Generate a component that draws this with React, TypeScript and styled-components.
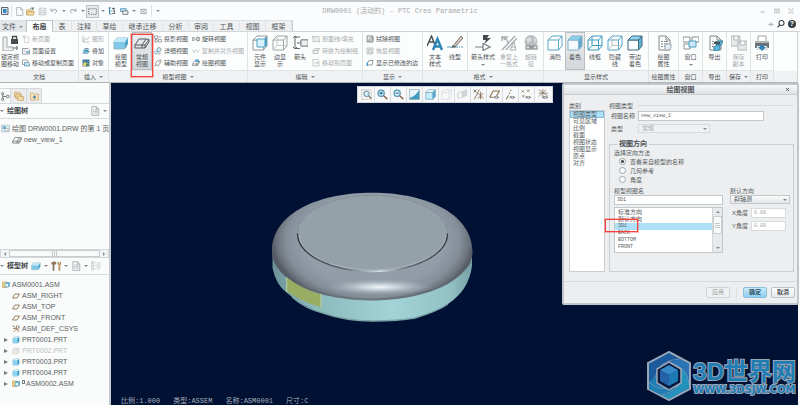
import React from "react";
import styled, { createGlobalStyle, css } from "styled-components";

const SANS = `"Liberation Sans", "Noto Sans CJK SC", sans-serif`;
const MONO = `"Liberation Mono", "Noto Sans CJK SC", monospace`;

const Global = createGlobalStyle`
  * { box-sizing: border-box; }
  html, body { margin: 0; padding: 0; }
  body { font: 6px/8px ${SANS}; color: #4c5155; background: #fafbfb; overflow: hidden; }
  button, input, select { font: inherit; color: inherit; margin: 0; padding: 0; border: 0; background: none; }
  ul { list-style: none; margin: 0; padding: 0; }
  h1, h2 { margin: 0; font: inherit; }
`;

/* ---------- icons (16 unit grid) ---------- */

const page = <path d="M3 1h7l4 4v10H3zM10 1v4h4" fill="#fbfcfc" stroke="#858b90" />;
const lines = <path d="M5 6.500h2m1 0h4M5 9h2m1 0h4M5 11.500h2m1 0h4" stroke="#858b90" />;
const floppy = <path d="M2 2h12v12H2zM5 2v5h6V2M4 14v-4h8v4" fill="#eceff0" stroke="#b0b4b7" />;
const eye = (
  <>
    <path d="M6 12q4-4 9 0q-4 4-9 0z" fill="#777d82" />
    <circle cx="10.500" cy="12" r="1.200" fill="#fff" />
  </>
);

const wireFrame = "M1 5l4-4h10l-3.500 4zM1 5v10h10.500V5M11.500 15L15 11V1";

function cube(front: string, top: string, side: string, line: string) {
  return (
    <g stroke={line} strokeLinejoin="round">
      <path d="M1 5h10.500v10H1z" fill={front} />
      <path d="M1 5l4-4h10l-3.500 4z" fill={top} />
      <path d="M11.500 5L15 1v10l-3.500 4z" fill={side} />
    </g>
  );
}

const slab = (
  <g strokeLinejoin="round">
    <path d="M1 7l3-4h11l-3 4v6l-1 1H1z" fill="#80c8e8" stroke="#8eb8ca" />
    <path d="M1 7l3-4h11l-3 4z" fill="#c4eaf8" />
    <path d="M12 7l3-4v6l-3 5z" fill="#4fa4cb" />
  </g>
);
const slabLine = (
  <path
    d="M1 10l4-6h7l-4 6zM1 10v3h7v-3M8 13h3l4-6V4.500L12 4M11 13v-3l4-5.500M8 10h3"
    fill="none"
    stroke="#565b60"
    strokeLinejoin="round"
  />
);

const ICONS: Record<string, React.ReactNode> = {
  app: (
    <>
      <path d="M1 1h13v14H1z" fill="#dbeaf3" stroke="#61676c" strokeWidth="2" />
      <path d="M4 4h7v8H4z" fill="#328ac0" />
    </>
  ),
  page,
  list: <>{page}{lines}</>,
  open: (
    <>
      <path d="M1 14V5h5l1 2h6v7z" fill="#f2d08c" stroke="#b58e45" />
      <path d="M1 14l3-5h11l-2 5z" fill="#fbe3ad" stroke="#b58e45" />
      <path d="M7 4q3-4 6-1M13 0v4h-3" fill="none" stroke="#5c6266" strokeWidth="1.500" />
    </>
  ),
  save: floppy,
  undo: <path d="M2 3v5h5M2.500 8q5-6 10-2q3 4-3 7" fill="none" stroke="#999ea2" strokeWidth="1.800" />,
  redo: <path d="M14 3v5H9M13.500 8q-5-6-10-2q-3 4 3 7" fill="none" stroke="#999ea2" strokeWidth="1.800" />,
  marquee: <path d="M1 3h14v10H1z" fill="none" stroke="#54595d" strokeDasharray="2 1.500" strokeWidth="1.300" />,
  regen: (
    <>
      <path d="M3 1v13M1 2h5M3 8h4M3 14h4" stroke="#3e8db3" strokeWidth="2" />
      <path d="M8 3h6M9 8h5M8 13h6M11 1v5M13 6v6" stroke="#4f565b" strokeWidth="1.600" />
    </>
  ),
  windows: (
    <>
      <path d="M1 3h10v5H1z" fill="#cbe8f5" stroke="#4c91b2" strokeWidth="1.500" />
      <path d="M5 7h9v6H5z" fill="#f7f9fa" stroke="#656b70" strokeWidth="1.500" />
    </>
  ),
  close: <path d="M2 3h12v10H2zM5 5l6 6M11 5l-6 6" fill="none" stroke="#71777b" strokeWidth="1.400" />,
  lock: (
    <>
      <path d="M1 2h4v10h6v4H1z" fill="#eceff0" stroke="#a1a6a9" />
      <path d="M9 4h7v5H9z" fill="#484d51" />
      <path d="M10.500 4V1.500h4V4" fill="none" stroke="#484d51" strokeWidth="1.400" />
      <path d="M11 13h5M14 11l2 2-2 2" fill="none" stroke="#656b70" />
    </>
  ),
  newPage: (
    <>
      <path d="M5 4h9v11H5z" fill="#fafafa" stroke="#b5b9bb" />
      <path d="M4 0v8M0 4h8M1 1l6 6M7 1L1 7" stroke="#c2c5c7" />
    </>
  ),
  pageSetup: (
    <>
      <path d="M1 3h11l3 3v8H1z" fill="#fff" stroke="#747a7e" strokeWidth="1.400" />
      <path d="M8 8h6v5H8z" fill="#82b8d0" />
      <path d="M3 6h6M3 9h4" stroke="#969b9e" />
    </>
  ),
  pageMove: (
    <>
      <path d="M1 2h9l2 2v7H1z" fill="#fff" stroke="#747a7e" strokeWidth="1.400" />
      <path d="M5 7h8l2 2v5H5z" fill="#c5e4f1" stroke="#4f8ba5" strokeWidth="1.400" />
    </>
  ),
  graph: <path d="M2 1v13h13M3 12l4-6 4 3 4-6" fill="none" stroke="#a5aaad" strokeWidth="1.400" />,
  overlay: (
    <>
      <path d="M1 8l4-3h10l-4 4z" fill="#3b99c5" />
      <path d="M1 12l4-3h10l-4 4z" fill="#8bc6df" stroke="#397b98" />
      <path d="M5 3h8" stroke="#5f676b" strokeWidth="1.500" />
    </>
  ),
  object: (
    <>
      <path d="M1 1h14v14H1z" fill="#3f7ea2" />
      <path d="M2 10l4-5 3 4 3-2 3 7H2z" fill="#e5cf6d" />
      <path d="M8 9h6v5H8z" fill="#5a8360" />
    </>
  ),
  slab,
  slabLine,
  projection: <path d="M1 2h7v5H1zM9 4h6M9 9h6v5H9zM2 9h4v5H2z" fill="none" stroke="#6b7175" strokeWidth="1.200" />,
  detail: (
    <>
      <circle cx="10" cy="5" r="4" fill="#d5edf7" stroke="#5b7d8d" strokeWidth="1.300" />
      <circle cx="4" cy="11" r="3" fill="none" stroke="#4a93b5" strokeWidth="1.400" />
      <path d="M8 12h6M8 14h4" stroke="#71777b" />
    </>
  ),
  auxiliary: <path d="M2 10l5-7 6 4-5 7zM10 2h4v4M1 14l4-2" fill="none" stroke="#6b7175" strokeWidth="1.300" />,
  rotate: <path d="M1 5h3v6H1zM5 8h3M9 5h6v6H9zM12 3v10" fill="none" stroke="#777d80" strokeWidth="1.300" />,
  align: <path d="M1 5l3 6 3-6M8 5l3 6 4-6" fill="none" stroke="#b5b9bb" strokeWidth="1.300" />,
  drawView: (
    <>
      {slabLine}
      <path d="M5 1h9v5H8z" fill="#54a9cf" />
    </>
  ),
  component: (
    <>
      {cube("#fff", "#fff", "#fff", "#92989c")}
      <path d="M5 4h8v8H5z" fill="#d9f1fa" stroke="#4aa0c4" />
      <path d="M13 4l2-3v9l-2 2z" fill="#4aa0c4" />
    </>
  ),
  edges: (
    <g fill="none" stroke="#9da2a5">
      <path d={wireFrame} />
      <path d="M5 1v9.500h10M5 10.500L1 15" stroke="#c5c8ca" />
    </g>
  ),
  arrows: (
    <g fill="none" stroke="#63696d">
      <path d="M3 1v13M3 2h5M3 13.500h5M9 5h7v6H9zM9 8H5" />
      <path d="M1 3l2-2 2 2M1 12l2 2 2-2" />
      <path d="M9 5h7v6H9z" fill="#eceff0" stroke="#8b9195" />
    </g>
  ),
  hatch: <path d="M2 3h12v10H2zM2 8l5-5M2 13L12 3M8 13l6-6M1 1v4M15 11v4" fill="none" stroke="#b0b4b7" strokeWidth="1.300" />,
  convert: <path d="M2 7l4-4h9l-3 6v4H2zM2 7h10" fill="#f3f4f5" stroke="#a5aaad" strokeWidth="1.400" />,
  movePage: <path d="M2 1h9l3 3v10H2zM5 8h7M9 5l3 3-3 3" fill="none" stroke="#b0b4b7" strokeWidth="1.400" />,
  erase: <path d="M2 2h12v12H2zM5 11l6-7 3 3-6 6z" fill="#e9edef" stroke="#666c70" strokeWidth="1.500" />,
  restore: <path d="M2 2h12v12H2zM5 5h6v6H5z" fill="#eef0f1" stroke="#b0b4b7" strokeWidth="1.500" />,
  modEdge: (
    <>
      <path d="M3 9l3-6h8l-2 9H3z" fill="#fff" stroke="#6b7175" strokeWidth="1.400" />
      <path d="M1 8l3-3v9H1z" fill="#4aa0c4" />
    </>
  ),
  textStyle: (
    <g fill="none">
      <path d="M0 11L4.500 1 8 10M2 7h5" stroke="#4d5256" strokeWidth="1.500" />
      <path d="M6 15l4.500-11L15 15M8 11.500h6" stroke="#2b86b4" strokeWidth="2.400" />
    </g>
  ),
  lineType: (
    <>
      <path d="M0 12h16" stroke="#4a9ec3" strokeDasharray="4 1 1 1" />
      <path d="M6 11L14 1l2 2-8 9z" fill="#d8c5b5" stroke="#777a7c" />
      <path d="M4 13l2-3 3 2z" fill="#565b5f" />
    </>
  ),
  arrowStyle: (
    <>
      <path d="M8 0h6l-2 3h4l-7 6 2-4H8z" fill="#44494d" />
      <path d="M0 12h8M8 8.500v7l7-3.500z" fill="#fff" stroke="#787e82" strokeWidth="1.200" />
    </>
  ),
  repeat: (
    <>
      <path d="M1 6V1M1 2h5l-3 3M1 3q5-1 6 5M1 15L14 1M5 15L16 3" fill="none" stroke="#aaaeb1" strokeWidth="1.400" />
      <path d="M9 15l4-8 2 8zM10 12h5" fill="none" stroke="#aaaeb1" />
    </>
  ),
  hyperlink: (
    <>
      <circle cx="8" cy="6.500" r="6.500" fill="#b9bdc0" />
      <path d="M3 4l4-2 2 3-4 3zM10 2l4 3-2 3z" fill="#dadddf" />
      <path d="M3 11h5v3H3zM9 11h5v3H9zM6 12.500h5" fill="#eee" stroke="#999ea1" strokeWidth="1.300" />
    </>
  ),
  hiddenOff: <path d={wireFrame} fill="#fff" stroke="#54a5c6" strokeLinejoin="round" />,
  shaded: cube("#f4fafd", "#8cd3ee", "#62aacb", "#82b2c5"),
  wire: (
    <g fill="none" stroke="#3e9abf">
      <path d={wireFrame} />
      <path d="M5 1v9.500h10M5 10.500L1 15" />
    </g>
  ),
  hiddenLine: (
    <g fill="none" stroke="#56a3c3">
      <path d={wireFrame} />
      <path d="M5 1v9.500h10M5 10.500L1 15" stroke="#b8bfc3" />
    </g>
  ),
  shadedEdge: cube("#fafcfd", "#91d4ed", "#64b0d0", "#3e6d80"),
  attributes: (
    <>
      {page}
      {lines}
      <path d="M9 9h6v4l-2 2H9z" fill="#deedf3" stroke="#a1a8ac" />
    </>
  ),
  panes: (
    <g fill="#fff" stroke="#8b9195">
      <path d="M0 2h7v5H0zM9 2h7v5H9zM1 9h6v5H1z" />
      <path d="M6 6h7v6H6z" fill="#ccebf7" stroke="#4b9fc1" />
    </g>
  ),
  exporter: (
    <>
      {page}
      {lines}
      <path d="M8 8l3-2h5l-2 4h-4zM7 12l3-2h3v4l-2 2H7z" fill="#5cb6db" stroke="#36809f" />
      <path d="M7 8h6" stroke="#484d50" strokeWidth="2" />
    </>
  ),
  saveCopy: (
    <g fill="#e6e8e9" stroke="#b3b7b9">
      <path d="M0 1h9v10H0zM3 1v4h4V1" />
      <path d="M7 6h9v9H7zM9 6v4h5V6" />
    </g>
  ),
  print: (
    <>
      <path d="M4 1h8v6H4z" fill="#fff" stroke="#9da2a5" />
      <path d="M1 6h14v7H1z" fill="#6b7175" />
      <path d="M1 6h14v2H1z" fill="#b0b5b8" />
      <path d="M3 11h10l1 4H2z" fill="#dbe0e2" />
      <path d="M6 10h4v2h2l-4 4-4-4h2z" fill="#3483b5" />
    </>
  ),
  chevron: <path d="M2 10l6-6 6 6zM5 12l3-3 3 3" fill="#fff" stroke="#7a8084" strokeWidth="1.500" />,
  search: (
    <g fill="none" stroke="#3f4448" strokeWidth="2.200">
      <circle cx="9" cy="6" r="5" />
      <path d="M5.500 10L1 14.500" />
    </g>
  ),
  min: <path d="M2 11h10" stroke="#b5b8ba" strokeWidth="3" />,
  max: <path d="M1 3h14v10H1zM1 5h14M4 9h8" fill="none" stroke="#b5b8ba" strokeWidth="2" />,
  exit: <path d="M1 2l5 6-5 6h4l3-4 3 4h4l-5-6 5-6h-4L8 6 5 2z" fill="#fff" stroke="#b5b8ba" strokeWidth="1.500" />,
  x: <path d="M3 3l10 10M13 3L3 13" stroke="#54595d" strokeWidth="3" />,
  nodes: (
    <g fill="none" stroke="#63686c" strokeWidth="1.600">
      <circle cx="3" cy="3" r="2" />
      <circle cx="3" cy="13" r="2" />
      <circle cx="12" cy="8" r="2.500" />
      <path d="M3 5v6M4 8h5" />
    </g>
  ),
  folders: (
    <g fill="#f8e0ad" stroke="#bd914d">
      <path d="M1 2h4l1 1h4v6H1z" />
      <path d="M3 5h4l1 1h4v6H3z" />
      <path d="M6 8h4l1 1h4v6H6z" />
    </g>
  ),
  favorite: (
    <>
      <path d="M1 14V2h5l2 2h7v10z" fill="#f8e6ba" stroke="#bd914d" />
      <path d="M8 6v6M5 9h6" stroke="#467da1" strokeWidth="2" />
    </>
  ),
  drawing: (
    <>
      <path d="M1 2h14v12H1z" fill="#ddebf2" stroke="#9eb0ba" />
      <path d="M3 4h6v5H3z" fill="#68b2d2" />
      <path d="M7 8h6v4H7z" fill="#fff" stroke="#8d979d" />
    </>
  ),
  tools: (
    <>
      <path d="M1 3q3-3 7-1v3H5v10H3V5H1z" fill="#9a7551" stroke="#666" strokeWidth=".6" />
      <path d="M11 1v4l1.500 2v8h2V7L16 5V1l-2 3z" fill="#d5a968" stroke="#7e6544" strokeWidth=".6" />
    </>
  ),
  treeFilter: (
    <g fill="none" stroke="#b3b7ba">
      <path d="M1 1h3v3H1zM1 6h3v3H1zM1 11h3v3H1zM6 2h3M6 7h3M6 12h3" />
      <circle cx="12" cy="8" r="2.500" />
      <path d="M10 14l5-4M10 3h5" />
    </g>
  ),
  asm: (
    <>
      <path d="M1 2h9v11H1z" fill="#f4d281" stroke="#b38d4b" />
      <path d="M6 5l2-2h7v7l-2 2H6z" fill="#62b9de" stroke="#3e84a2" />
      <path d="M7 6h5v5H7z" fill="#f0f9fc" />
    </>
  ),
  plane: <path d="M1 12L6 4h9l-5 8z" fill="none" stroke="#8f7350" strokeWidth="1.800" />,
  csys: (
    <>
      <path d="M3 2l6 6-6 6M9 8h6M9 8L9 1M9 8l5 6M2 7h6" fill="none" stroke="#8b6945" strokeWidth="1.500" />
      <path d="M1 2h3M11 2h4M12 5h3" stroke="#62686c" strokeWidth="1.600" />
    </>
  ),
  part: (
    <g strokeLinejoin="round">
      <path d="M2 5l3-3h9v9l-3 3H2z" fill="#3d9cc4" stroke="#3788a8" />
      <path d="M2 5h9v9H2z" fill="#8cd5f0" />
      <path d="M2 5l3-3h9l-3 3z" fill="#d0f1fb" />
    </g>
  ),
  partOff: <path d="M2 5l3-3h9v9l-3 3H2zM2 5h9v9M11 5l3-3" fill="#eeede5" stroke="#c7c7c0" strokeLinejoin="round" />,
  fit: (
    <>
      <path d="M1 1h14v14H1z" fill="#f5f6f7" stroke="#b2a48f" strokeDasharray="2 1" />
      <circle cx="8" cy="7" r="4" fill="#d0edf8" stroke="#668392" strokeWidth="1.400" />
      <path d="M11 10l4 4" stroke="#7a6b5c" strokeWidth="2" />
    </>
  ),
  zoomIn: (
    <>
      <circle cx="6" cy="6" r="4.500" fill="#d5effa" stroke="#3983a5" strokeWidth="1.500" />
      <path d="M6 3.500v5M3.500 6h5" stroke="#2b6f91" strokeWidth="1.500" />
      <path d="M10 10l5 5" stroke="#8a6e4c" strokeWidth="2.200" />
    </>
  ),
  zoomOut: (
    <>
      <circle cx="6" cy="6" r="4.500" fill="#d5effa" stroke="#3983a5" strokeWidth="1.500" />
      <path d="M3.500 6h5" stroke="#2b6f91" strokeWidth="1.500" />
      <path d="M10 10l5 5" stroke="#8a6e4c" strokeWidth="2.200" />
    </>
  ),
  repaint: (
    <>
      <path d="M1 1h14v14H1z" fill="#3d9dc0" stroke="#7595a1" />
      <path d="M1 1h14Q11 9 1 13z" fill="#e9f4f6" />
    </>
  ),
  display: cube("#c5ebf7", "#edf9fc", "#4baacd", "#75a8bd"),
  saved: <path d="M1 5l4-4h10v10l-3.500 4H1zM1 5h10.500v10M11.500 5L15 1" fill="#f7f7f7" stroke="#d5d7d9" />,
  viewMgr: (
    <g stroke="#c3c6c8">
      <path d="M1 6l3-2h5v7l-2 2H1z" fill="#f3f4f4" />
      <path d="M8 5l3-3h3v7l-3 2H8z" fill="#d2d5d7" />
    </g>
  ),
  datums: <path d="M1 1l4 4M5 1L1 5M2 15L9 1M7 6l8 8M7 14l8-8M11 4v11" fill="none" stroke="#80684e" strokeWidth="1.300" />,
  planes: <><path d="M1 12L6 3h9l-4 7M1 12h5" fill="none" stroke="#8d7150" strokeWidth="1.500" />{eye}</>,
  axes: <><path d="M2 15L5 9M6 7l1-2M8 3l1-2" fill="none" stroke="#8d7150" strokeWidth="1.500" />{eye}</>,
  points: <><path d="M1 2l3 3M4 2L1 5M9 1l3 3M12 1L9 4M2 9l3 3M5 9l-3 3" stroke="#8d7150" strokeWidth="1.300" />{eye}</>,
  csysShow: <><path d="M1 1l13 9M1 11L12 1M7 0v14M1 6h13" stroke="#80684e" />{eye}</>,
};

const Svg = styled.svg<{ $s: number }>`
  display: block;
  flex: none;
  width: ${(p) => p.$s}px;
  height: ${(p) => p.$s}px;
`;

function Icon({ name, size = 8 }: { name: string; size?: number }) {
  return (
    <Svg $s={size} viewBox="0 0 16 16" fill="none" aria-hidden>
      {ICONS[name]}
    </Svg>
  );
}

const Caret = styled.span`
  flex: none;
  width: 0;
  height: 0;
  border: 2px solid transparent;
  border-top: 2px solid #85898c;
  border-bottom: 0;
`;

/* ---------- window frame ---------- */

const Window = styled.div`
  position: relative;
  display: flex;
  flex-direction: column;
  height: 100vh;
  min-height: 405px;
  overflow: hidden;
  border-top: 2px solid #c3c8cb;
`;

const TitleBar = styled.header`
  display: grid;
  grid-template-columns: 1fr auto 1fr;
  align-items: center;
  height: 18px;
  background: #fbfcfd;
`;

const QuickBar = styled.div`
  display: flex;
  align-items: center;
`;

const QuickButton = styled.button<{ $on?: boolean; $w?: number }>`
  display: flex;
  align-items: center;
  justify-content: center;
  width: ${(p) => p.$w ?? 12}px;
  height: 13px;
  ${(p) => p.$on && css`background: #e7eaec; border: 1px solid #bcc1c4;`}
`;

const Divider = styled.span<{ $h?: number }>`
  flex: none;
  width: 1px;
  height: ${(p) => p.$h ?? 12}px;
  margin: 0 2px;
  background: #dde0e2;
`;

const Title = styled.h1`
  font: 7px/9px ${MONO};
  color: #a6a9ab;
  white-space: pre;
`;

const WindowButtons = styled.div`
  display: flex;
  justify-content: flex-end;
  gap: 2px;
  padding-right: 3px;
`;

const TabRow = styled.nav`
  display: flex;
  height: 12px;
  background: #fbfcfd;
`;

const Tabs = styled.div`
  display: flex;
  background: #eef0f2;
  border-right: 1px solid #c9cdd0;
  border-bottom: 1px solid #cfd3d5;
`;

const Tab = styled.button<{ $w: number; $active?: boolean; $file?: boolean }>`
  display: flex;
  align-items: center;
  justify-content: center;
  gap: 3px;
  width: ${(p) => p.$w}px;
  height: 12px;
  font-size: 7px;
  white-space: nowrap;
  color: #53585c;
  border-top: 1px solid #dde0e2;
  border-right: 1px solid #e1e4e6;
  ${(p) => p.$file && css`background: #e4e7ea;`}
  ${(p) =>
    p.$active &&
    css`
      background: #fcfdfd;
      border: 1px solid #bfc4c7;
      border-bottom: 0;
      font-weight: 700;
      color: #3c4144;
    `}
`;

const TabTools = styled.div`
  flex: 1;
  display: flex;
  align-items: center;
  justify-content: flex-end;
  gap: 3px;
  padding: 0 4px 3px 0;
  border-bottom: 1px solid #cfd3d5;
`;

const HelpButton = styled.button`
  width: 8px;
  height: 8px;
  border-radius: 50%;
  background: #34393d;
  color: #fff;
  font-size: 7px;
  font-weight: 700;
  line-height: 8px;
`;

/* ---------- ribbon ---------- */

const Ribbon = styled.div`
  display: flex;
  height: 51px;
  margin-right: 2px;
  background: linear-gradient(#fcfdfd 39px, #eff1f2 39px);
  border-right: 1px solid #cfd3d5;
  border-bottom: 1px solid #aeb4b9;
`;

const Group = styled.section<{ $w: number }>`
  display: flex;
  flex-direction: column;
  flex: 0 0 ${(p) => p.$w}px;
  border-right: 1px solid #e0e3e5;
`;

const GroupBody = styled.div<{ $pad?: number }>`
  display: flex;
  height: 39px;
  padding-left: ${(p) => p.$pad ?? 0}px;
  border-bottom: 1px solid #e2e5e7;
`;

const GroupLabel = styled.div`
  display: flex;
  align-items: center;
  justify-content: center;
  gap: 3px;
  height: 11px;
  white-space: nowrap;
  color: #4c5155;
`;

const Big = styled.button<{ $w?: number; $on?: boolean }>`
  display: flex;
  flex-direction: column;
  align-items: center;
  flex: 0 0 ${(p) => p.$w ?? 20}px;
  padding-top: 3px;
  gap: 3px;
  line-height: 7px;
  white-space: pre;
  ${(p) => p.$on && css`background: linear-gradient(#eceef0, #d3d7da); box-shadow: inset 0 0 0 1px #b9bec2;`}
  &:disabled { color: #a6aaad; }
`;

const Rows = styled.div`
  display: flex;
  flex-direction: column;
  padding: 1px 0 0 2px;
  margin-right: 2px;
`;

const Row = styled.button`
  display: flex;
  align-items: center;
  gap: 2px;
  height: 12px;
  white-space: nowrap;
  &:disabled { color: #a6aaad; }
`;

type BigDef = { icon: string; text: string; w?: number; on?: boolean; off?: boolean; caret?: boolean };
type RowDef = [icon: string, text: string, off?: boolean];

function BigButton({ icon, text, w, on, off, caret }: BigDef) {
  return (
    <Big $w={w} $on={on} disabled={off} aria-pressed={on}>
      <Icon name={icon} size={16} />
      <span>{text}</span>
      {caret && <Caret />}
    </Big>
  );
}

function RowStack({ rows }: { rows: RowDef[] }) {
  return (
    <Rows>
      {rows.map(([icon, text, off]) => (
        <Row key={text} disabled={off}>
          <Icon name={icon} />
          {text}
        </Row>
      ))}
    </Rows>
  );
}

type GroupDef = { w: number; label: string; caret?: boolean; pad?: number; items: (BigDef | RowDef[] | "sep")[] };

const GROUPS: GroupDef[] = [
  {
    w: 79, label: "文档",
    items: [
      { icon: "lock", text: "锁定视\n图移动", w: 20 },
      [["newPage", "新页面", true], ["pageSetup", "页面设置"], ["pageMove", "移动或复制页面"]],
    ],
  },
  { w: 30, label: "插入", caret: true, pad: 1, items: [[["graph", "图形", true], ["overlay", "叠加"], ["object", "对象"]]] },
  {
    w: 139, label: "模型视图", caret: true, pad: 1,
    items: [
      { icon: "slab", text: "绘图\n模型", w: 22 },
      { icon: "slabLine", text: "常规\n视图", on: true },
      [["projection", "投影视图"], ["detail", "详细视图"], ["auxiliary", "辅助视图"]],
      [["rotate", "旋转视图"], ["align", "复制并对齐视图", true], ["drawView", "绘图视图"]],
    ],
  },
  {
    w: 115, label: "编辑", caret: true, pad: 2,
    items: [
      { icon: "component", text: "元件\n显示" },
      { icon: "edges", text: "边显\n示" },
      { icon: "arrows", text: "箭头" },
      [["hatch", "剖面线/填充", true], ["convert", "转换为绘制组", true], ["movePage", "移动到页面", true]],
    ],
  },
  { w: 60, label: "显示", caret: true, pad: 1, items: [[["erase", "拭除视图"], ["restore", "恢复视图", true], ["modEdge", "显示已修改的边"]]] },
  {
    w: 121, label: "格式", caret: true, pad: 2,
    items: [
      { icon: "textStyle", text: "文本\n样式" },
      { icon: "lineType", text: "线型" },
      "sep",
      { icon: "arrowStyle", text: "箭头样式", w: 26, caret: true },
      { icon: "repeat", text: "重复上\n一格式", w: 26, off: true },
      { icon: "hyperlink", text: "超链\n接", w: 18, off: true },
    ],
  },
  {
    w: 105, label: "显示样式", pad: 1,
    items: [
      { icon: "hiddenOff", text: "消隐" },
      { icon: "shaded", text: "着色", on: true },
      { icon: "wire", text: "线框" },
      { icon: "hiddenLine", text: "隐藏\n线" },
      { icon: "shadedEdge", text: "带边\n着色" },
    ],
  },
  { w: 30, label: "绘图属性", items: [{ icon: "attributes", text: "绘图\n属性", w: 29 }] },
  { w: 24, label: "窗口", items: [{ icon: "panes", text: "窗口", w: 23, caret: true }] },
  { w: 24, label: "导出", items: [{ icon: "exporter", text: "导出", w: 23 }] },
  { w: 24, label: "保存", caret: true, items: [{ icon: "saveCopy", text: "保存\n副本", w: 23, off: true }] },
  { w: 23, label: "打印", items: [{ icon: "print", text: "打印", w: 22 }] },
];

const TABS: [string, number][] = [
  ["表", 19], ["注释", 25], ["草绘", 26], ["继承迁移", 40], ["分析", 26], ["审阅", 25], ["工具", 26], ["视图", 26], ["框架", 26],
];

/* ---------- side panel ---------- */

const Main = styled.main`
  flex: 1;
  display: flex;
  min-height: 0;
  margin-right: 2px;
`;

const Side = styled.aside`
  flex: 0 0 111px;
  display: flex;
  flex-direction: column;
  overflow: hidden;
  background: #fafbfb;
  border-right: 2px solid #c5cacd;
  font-size: 7px;
`;

const SideTabs = styled.div`
  display: flex;
  align-items: flex-end;
  height: 21px;
  border-bottom: 1px solid #d5d9db;
`;

const SideTab = styled.button<{ $w: number; $active?: boolean }>`
  display: flex;
  align-items: center;
  justify-content: center;
  width: ${(p) => p.$w}px;
  height: 15px;
  background: ${(p) => (p.$active ? "#fafbfb" : "#e9ebed")};
  border: 1px solid #d5d9db;
  border-width: 1px 1px 0 0;
`;

const SideHeader = styled.div<{ $h: number }>`
  display: flex;
  align-items: center;
  gap: 3px;
  flex: 0 0 ${(p) => p.$h}px;
  padding-right: 2px;
  border-bottom: 1px solid #d8dbdd;
`;

const SideTitle = styled.h2`
  font-weight: 700;
  color: #3c4144;
  white-space: nowrap;
`;

const Spacer = styled.span`flex: 1;`;

const DrawTree = styled.ul`
  flex: 1;
  padding-top: 4px;
`;

const TreeItem = styled.li<{ $indent: number; $off?: boolean }>`
  display: flex;
  align-items: center;
  gap: 2px;
  height: 11px;
  padding-left: ${(p) => p.$indent}px;
  white-space: nowrap;
  color: ${(p) => (p.$off ? "#bdc0c2" : "#5b6064")};
`;

const Expander = styled.span`
  width: 0;
  height: 0;
  margin-right: 2px;
  border: 2px solid transparent;
  border-left: 4px solid #777c80;
  border-right: 0;
`;

const HScroll = styled.div`
  display: flex;
  flex: 0 0 9px;
  border: 1px solid #d3d7d9;
  background: #f1f3f4;
`;

const ScrollArrow = styled.button<{ $dir: "left" | "right" | "up" | "down" }>`
  display: flex;
  align-items: center;
  justify-content: center;
  flex: 0 0 8px;
  &::after {
    content: "";
    border: 2px solid transparent;
    border-${(p) => ({ left: "left", right: "right", up: "top", down: "bottom" })[p.$dir]}: 0;
    border-${(p) => ({ left: "right", right: "left", up: "bottom", down: "top" })[p.$dir]}: 2px solid #84898c;
  }
`;

const Thumb = styled.div<{ $vertical?: boolean }>`
  flex: ${(p) => (p.$vertical ? "0 0 18px" : "1")};
  display: flex;
  align-items: center;
  justify-content: center;
  background: #f8f9f9;
  border: 1px solid #c9cdd0;
  &::after {
    content: "";
    width: 5px;
    height: 5px;
    background: repeating-linear-gradient(${(p) => (p.$vertical ? "180deg" : "90deg")}, #c5c9cb 0 1px, transparent 1px 2px);
  }
`;

const ModelTree = styled.ul`
  flex: 0 0 130px;
  padding-top: 4px;
`;

const MODEL: { icon: string; text: string; branch?: boolean; off?: boolean; mark?: boolean }[] = [
  { icon: "plane", text: "ASM_RIGHT" },
  { icon: "plane", text: "ASM_TOP" },
  { icon: "plane", text: "ASM_FRONT" },
  { icon: "csys", text: "ASM_DEF_CSYS" },
  { icon: "part", text: "PRT0001.PRT", branch: true },
  { icon: "partOff", text: "PRT0002.PRT", branch: true, off: true },
  { icon: "part", text: "PRT0003.PRT", branch: true },
  { icon: "part", text: "PRT0004.PRT", branch: true },
  { icon: "asm", text: "ASM0002.ASM", branch: true, mark: true },
];

const Mark = styled.i`
  width: 3px;
  height: 4px;
  margin: 0 -1px 3px 0;
  border: 1px solid #767b7e;
`;

/* ---------- graphics area ---------- */

const Canvas = styled.section`
  position: relative;
  flex: 1;
  display: flex;
  flex-direction: column;
  justify-content: space-between;
  min-width: 0;
  background: #001133;
`;

const ViewBar = styled.div`
  display: flex;
  align-self: flex-start;
  margin: 3px 0 0 246px;
  height: 17px;
  padding: 0 1px;
  background: #f7f8f9;
  border: 1px solid #d5d8da;
`;

const ViewButton = styled.button`
  display: flex;
  align-items: center;
  justify-content: center;
  width: 16px;
  border-right: 1px solid #d9dcde;
  &:last-child { border-right: 0; }
`;

const Model = styled.svg`
  position: absolute;
  left: 159px;
  top: 107px;
  width: 204px;
  height: 133px;
`;

const StatusLine = styled.div`
  display: flex;
  gap: 13px;
  padding-left: 10px;
  font: 7px/7px ${MONO};
  color: #a3acba;
  white-space: nowrap;
`;

const Watermark = styled.div`
  position: absolute;
  right: 2px;
  bottom: 4px;
  display: flex;
  align-items: center;
  gap: 1px;
`;

const Logo = styled.svg`
  width: 46px;
  height: 50px;
`;

const Brand = styled.div`
  display: flex;
  flex-direction: column;
  gap: 1px;
  font-weight: 700;
  color: #1f7db4;
  -webkit-text-stroke: 2px #9aa6b8;
  paint-order: stroke fill;
`;

const BrandName = styled.span`
  font-size: 24px;
  line-height: 25px;
`;

const BrandUrl = styled.span`
  font: 700 10px/9px "DejaVu Sans", sans-serif;
`;

function Assembly() {
  return (
    <Model viewBox="270 190 204 133" role="img" aria-label="ASM0001">
      <defs>
        <linearGradient id="teal" x1="272" x2="473" y1="0" y2="0" gradientUnits="userSpaceOnUse">
          <stop offset="0" stopColor="#6d9296" />
          <stop offset=".2" stopColor="#8ab9bb" />
          <stop offset=".6" stopColor="#a2d3d7" />
          <stop offset=".88" stopColor="#93c2c6" />
          <stop offset="1" stopColor="#779fa4" />
        </linearGradient>
        <radialGradient id="body" cx="373" cy="236" r="101" gradientUnits="userSpaceOnUse" gradientTransform="translate(0 87) scale(1 .65)">
          <stop offset=".7" stopColor="#929da7" />
          <stop offset=".86" stopColor="#868f99" />
          <stop offset=".95" stopColor="#6c737c" />
          <stop offset="1" stopColor="#545a63" />
        </radialGradient>
        <radialGradient id="glow">
          <stop offset="0" stopColor="#f2f7fa" />
          <stop offset=".35" stopColor="#d4dde4" stopOpacity=".8" />
          <stop offset="1" stopColor="#a4afb9" stopOpacity="0" />
        </radialGradient>
        <linearGradient id="rim" x1="297" x2="448" y1="0" y2="0" gradientUnits="userSpaceOnUse">
          <stop offset="0" stopColor="#33383f" />
          <stop offset=".3" stopColor="#59616a" />
          <stop offset=".55" stopColor="#d8e1e6" />
          <stop offset=".75" stopColor="#5d646d" />
          <stop offset="1" stopColor="#3a3f46" />
        </linearGradient>
      </defs>
      <path
        d="M272.500 250V268Q276 285 287 293Q303 307 323 313Q346 321 373 321Q398 321 415 318Q438 311 448 304Q469 290 472 266V250z"
        fill="url(#teal)"
      />
      <path
        d="M292 297Q306 309 323 313Q346 321 373 321Q398 321 415 318Q438 311 448 304"
        fill="none"
        stroke="#7ba4a8"
        strokeWidth="1.500"
      />
      <path
        d="M272 252C271 217 312 192.700 372 192.700S473 217 472.500 252Q473 262 462 273C445 290 410 300.300 373 300.300C338 300 308 293 290 280Q272 267 272 252z"
        fill="url(#body)"
      />
      <path d="M276 264Q284 277 303 287Q335 300 373 299.500Q420 298 448 283Q463 274 471 262" fill="none" stroke="#5c636c" strokeOpacity=".5" strokeWidth="2" />
      <ellipse cx="380" cy="287" rx="54" ry="8" fill="url(#glow)" />
      <ellipse cx="372.500" cy="233.500" rx="75" ry="38" fill="#95a1a9" />
      <path d="M297.500 233.500a75 38 0 0 0 150 0" fill="none" stroke="url(#rim)" strokeWidth="1.600" />
      <path d="M297.500 233.500a75 38 0 0 1 150 0" fill="none" stroke="#7a858e" strokeWidth=".7" strokeDasharray="8 2" />
      <path d="M299 235a73.500 35 0 0 0 147 0" fill="none" stroke="#b2bec5" strokeWidth=".7" />
      <path d="M286.700 277.500Q302 289 321 294.500V307.500Q300 301 286.700 291z" fill="#98ac62" />
      <path d="M286.700 277.500V292M321 294v14" stroke="#bfe0b4" strokeWidth=".8" />
    </Model>
  );
}

function HexLogo() {
  return (
    <Logo viewBox="0 0 46 50" aria-hidden>
      <path d="M23 1l21 11v26L23 49 2 38V12z" fill="#1c66a0" stroke="#9aa6b8" strokeWidth="2" />
      <path d="M3 13L23 2l10 6Q14 9 9 27L3 31z" fill="#1c5b9b" />
      <path d="M33 8l10 5v20Q42 17 25 12z" fill="#2a73b5" />
      <path d="M43 33v4L23 48l-8-4Q37 42 35 17Q42 22 43 33z" fill="#2392bd" />
      <path d="M3 31v7l12 6Q26 44 33 35L23 39 10 31 9 25z" fill="#1e7db3" />
      <path d="M33 8Q12 9 9 27M25 12Q42 17 43 33M35 17Q38 40 15 44M3 31Q12 42 33 35" fill="none" stroke="#7f9cb9" strokeWidth=".7" />
      <path d="M23 11l12 7v14l-12 7-12-7V18z" fill="#07183c" stroke="#9aa6b8" strokeWidth="1.500" />
      <path d="M23 14l9 5-9 5-9-5z" fill="#3489c8" />
      <path d="M14 19l9 5v11l-9-5z" fill="#2561a7" />
      <path d="M32 19l-9 5v11l9-5z" fill="#1c7bb3" />
    </Logo>
  );
}

/* ---------- drawing view dialog ---------- */

const Dialog = styled.div`
  position: absolute;
  top: 81px;
  right: 1px;
  width: 237px;
  background: #eceeef;
  border: 2px solid #c0c6ca;
  border-radius: 2px;
  color: #585d61;
`;

const DialogTitle = styled.div`
  display: grid;
  grid-template-columns: 12px 1fr 12px;
  align-items: center;
  height: 10px;
  background: linear-gradient(#f7f8f9, #dfe2e4);
  border-bottom: 1px solid #c9cdd0;
  text-align: center;
  font-size: 7px;
  font-weight: 700;
  color: #53585c;
`;

const DialogBody = styled.div`
  display: grid;
  grid-template-columns: 36px 1fr;
  gap: 4px;
  padding: 6px 3px 9px 5px;
`;

const Column = styled.div`
  display: flex;
  flex-direction: column;
`;

const Caption = styled.div`
  display: flex;
  align-items: center;
  gap: 4px;
  height: 9px;
  &[data-rule]::after {
    content: "";
    flex: 1;
    height: 1px;
    background: #dadddf;
  }
`;

const ListBox = styled.ul<{ $h: number }>`
  flex: 1;
  min-height: ${(p) => p.$h}px;
  background: #fff;
  border: 1px solid #c9cdd0;
`;

const Option = styled.li<{ $on?: boolean; $ring?: boolean }>`
  height: 7px;
  padding-left: 3px;
  line-height: 7px;
  white-space: nowrap;
  ${(p) => p.$on && css`background: #addff8;`}
  ${(p) => p.$ring && css`box-shadow: inset 0 0 0 1px #86b8d2;`}
`;

const FieldRow = styled.div<{ $h: number; $pad?: number }>`
  display: flex;
  align-items: center;
  height: ${(p) => p.$h}px;
  padding-left: ${(p) => p.$pad ?? 0}px;
`;

const Label = styled.label<{ $w?: number }>`
  flex: none;
  width: ${(p) => (p.$w ? `${p.$w}px` : "auto")};
  white-space: nowrap;
`;

const TextBox = styled.input<{ $w?: number }>`
  width: ${(p) => (p.$w ? `${p.$w}px` : "100%")};
  height: 10px;
  padding: 0 2px;
  background: #fff;
  border: 1px solid #c3c8cb;
  font: 5px/8px ${MONO};
  &:disabled { color: #9b9fa2; border-color: #d8dbdd; }
`;

const SelectWrap = styled.div<{ $w: number; $off?: boolean }>`
  display: grid;
  align-items: center;
  grid-template-columns: 1fr 9px;
  width: ${(p) => p.$w}px;
  height: 9px;
  background: ${(p) => (p.$off ? "#eff1f2" : "linear-gradient(#fafbfb, #e4e7e9)")};
  border: 1px solid ${(p) => (p.$off ? "#d7dadc" : "#c3c8cb")};
  color: ${(p) => (p.$off ? "#a6aaad" : "#4c5155")};
  select {
    grid-area: 1 / 1 / 2 / 3;
    appearance: none;
    height: 7px;
    padding-left: 3px;
    line-height: 7px;
    opacity: 1;
  }
  ${Caret} {
    grid-area: 1 / 2;
    justify-self: center;
  }
`;

const Fieldset = styled.fieldset`
  margin: 5px 0 0;
  padding: 0 3px 18px 4px;
  min-width: 0;
  border: 1px solid #cbcfd2;
  legend {
    margin-left: 3px;
    padding: 0 2px;
    font-size: 7px;
    font-weight: 700;
    color: #474c50;
  }
`;

const RadioRow = styled.label`
  display: flex;
  align-items: center;
  gap: 4px;
  height: 9px;
  padding-left: 5px;
`;

const Radio = styled.input`
  appearance: none;
  width: 7px;
  height: 7px;
  border: 1px solid #9da2a5;
  border-radius: 50%;
  background: #fff;
  &:checked { background: radial-gradient(#43484b 0 1px, #fff 2px); }
`;

const Orientation = styled.div`
  display: grid;
  grid-template-columns: 1fr 60px;
  column-gap: 7px;
  padding-top: 3px;
`;

const NameList = styled.div`
  display: flex;
  height: 46px;
  margin-top: 2px;
  background: #fff;
  border: 1px solid #c3c8cb;
  font: 5px/7px ${MONO};
  ul { flex: 1; padding-top: 1px; }
`;

const CjkOption = styled(Option)`
  font: 6px/7px ${SANS};
`;

const VScroll = styled.div`
  display: flex;
  flex-direction: column;
  width: 10px;
  background: #e7eaec;
  border-left: 1px solid #d3d7d9;
`;

const Angles = styled.div`
  display: flex;
  flex-direction: column;
  gap: 3px;
  padding: 4px 0 0 2px;
`;

const Footer = styled.div`
  display: flex;
  align-items: center;
  justify-content: flex-end;
  height: 22px;
  padding: 0 2px 0 0;
  gap: 4px;
  border-top: 1px solid #d5d8da;
`;

const PushButton = styled.button<{ $primary?: boolean }>`
  width: 24px;
  height: 11px;
  background: linear-gradient(#fdfdfd, #e7eaec);
  border: 1px solid #bdc2c5;
  border-radius: 2px;
  font-weight: 700;
  line-height: 9px;
  color: #4c5155;
  ${(p) => p.$primary && css`background: linear-gradient(#c9eafb, #8dcdf1); border-color: #8fbfd8; color: #2c5166;`}
  &:disabled { font-weight: 400; background: #eff1f2; border-color: #d1d4d6; color: #9b9fa2; }
`;

const Highlight = styled.div`
  position: absolute;
  border: 1px solid #f5403c;
  box-shadow: 0 0 0 1px rgba(245, 64, 60, 0.35);
  pointer-events: none;
`;

const RibbonHighlight = styled(Highlight)`
  left: 131px;
  top: 32px;
  width: 22px;
  height: 43px;
`;

const ListHighlight = styled(Highlight)`
  left: 41px;
  top: 134px;
  width: 33px;
  height: 13px;
`;

const CATEGORIES = ["视图类型", "可见区域", "比例", "截面", "视图状态", "视图显示", "原点", "对齐"];
const METHODS = ["查看来自模型的名称", "几何参考", "角度"];

function ViewDialog() {
  return (
    <Dialog role="dialog" aria-label="绘图视图">
      <DialogTitle>
        <span />
        <span>绘图视图</span>
        <button aria-label="关闭"><Icon name="x" size={5} /></button>
      </DialogTitle>
      <DialogBody>
        <Column>
          <Caption>类别</Caption>
          <ListBox $h={100} role="listbox" aria-label="类别">
            {CATEGORIES.map((c, i) => (
              <Option key={c} role="option" $on={i === 0} $ring={i === 0} aria-selected={i === 0}>{c}</Option>
            ))}
          </ListBox>
        </Column>
        <Column>
          <Caption data-rule="">视图类型</Caption>
          <FieldRow $h={12} $pad={2}>
            <Label $w={27} htmlFor="view-name">视图名称</Label>
            <TextBox id="view-name" $w={126} defaultValue="new_view_1" />
          </FieldRow>
          <FieldRow $h={13} $pad={2}>
            <Label $w={27} htmlFor="view-kind">类型</Label>
            <SelectWrap $w={72} $off>
              <select id="view-kind" disabled defaultValue="常规"><option>常规</option></select>
              <Caret />
            </SelectWrap>
          </FieldRow>
          <Fieldset>
            <legend>视图方向</legend>
            <Caption>选择定向方法</Caption>
            {METHODS.map((m, i) => (
              <RadioRow key={m}>
                <Radio type="radio" name="method" defaultChecked={i === 0} />
                {m}
              </RadioRow>
            ))}
            <Orientation>
              <Column>
                <Label htmlFor="model-view">模型视图名</Label>
                <TextBox id="model-view" defaultValue="3D1" />
                <NameList>
                  <ul role="listbox" aria-label="模型视图名">
                    <CjkOption role="option">标准方向</CjkOption>
                    <CjkOption role="option">默认方向</CjkOption>
                    <Option role="option" $on aria-selected>3D1</Option>
                    <Option role="option">BACK</Option>
                    <Option role="option">BOTTOM</Option>
                    <Option role="option">FRONT</Option>
                  </ul>
                  <VScroll>
                    <ScrollArrow $dir="up" aria-label="向上" />
                    <Thumb $vertical />
                    <Spacer />
                    <ScrollArrow $dir="down" aria-label="向下" />
                  </VScroll>
                </NameList>
              </Column>
              <Column>
                <Label htmlFor="default-dir">默认方向</Label>
                <SelectWrap $w={60}>
                  <select id="default-dir" defaultValue="斜轴测"><option>斜轴测</option></select>
                  <Caret />
                </SelectWrap>
                <Angles>
                  <FieldRow $h={10}>
                    <Label $w={19} htmlFor="angle-x">X角度</Label>
                    <TextBox id="angle-x" $w={35} disabled defaultValue="0.00" />
                  </FieldRow>
                  <FieldRow $h={10}>
                    <Label $w={19} htmlFor="angle-y">Y角度</Label>
                    <TextBox id="angle-y" $w={35} disabled defaultValue="0.00" />
                  </FieldRow>
                </Angles>
              </Column>
            </Orientation>
          </Fieldset>
        </Column>
      </DialogBody>
      <Footer>
        <PushButton disabled>应用</PushButton>
        <Divider $h={11} />
        <PushButton $primary>确定</PushButton>
        <PushButton>取消</PushButton>
      </Footer>
      <ListHighlight />
    </Dialog>
  );
}

/* ---------- page ---------- */

const VIEW_TOOLS = ["fit", "zoomIn", "zoomOut", "repaint", "display", "saved", "viewMgr", "datums", "planes", "axes", "points", "csysShow"];

export default function App() {
  return (
    <Window>
      <Global />
      <TitleBar>
        <QuickBar>
          <QuickButton $w={9} aria-label="应用程序"><Icon name="app" /></QuickButton>
          <Divider />
          <QuickButton $w={10} aria-label="新建"><Icon name="page" size={9} /></QuickButton>
          <QuickButton aria-label="打开"><Icon name="open" size={9} /></QuickButton>
          <QuickButton aria-label="保存"><Icon name="save" size={9} /></QuickButton>
          <QuickButton aria-label="撤消"><Icon name="undo" /></QuickButton>
          <QuickButton $w={7} aria-label="撤消列表"><Caret /></QuickButton>
          <QuickButton aria-label="重做"><Icon name="redo" /></QuickButton>
          <QuickButton $w={7} aria-label="重做列表"><Caret /></QuickButton>
          <QuickButton $w={13} $on aria-label="选择"><Icon name="marquee" size={9} /></QuickButton>
          <QuickButton $w={7} aria-label="选择列表"><Caret /></QuickButton>
          <QuickButton aria-label="重新生成"><Icon name="regen" /></QuickButton>
          <QuickButton aria-label="窗口"><Icon name="windows" size={9} /></QuickButton>
          <QuickButton $w={7} aria-label="窗口列表"><Caret /></QuickButton>
          <QuickButton aria-label="关闭窗口"><Icon name="close" size={7} /></QuickButton>
          <Divider />
          <QuickButton $w={7} aria-label="自定义"><Caret /></QuickButton>
        </QuickBar>
        <Title>DRW0001 (活动的) - PTC Creo Parametric</Title>
        <WindowButtons>
          <QuickButton aria-label="最小化"><Icon name="min" size={6} /></QuickButton>
          <QuickButton aria-label="最大化"><Icon name="max" size={6} /></QuickButton>
          <QuickButton aria-label="关闭"><Icon name="exit" size={6} /></QuickButton>
        </WindowButtons>
      </TitleBar>
      <TabRow>
        <Tabs>
          <Tab $w={26} $file>文件<Caret /></Tab>
          <Tab $w={27} $active>布局</Tab>
          {TABS.map(([t, w]) => <Tab key={t} $w={w}>{t}</Tab>)}
        </Tabs>
        <TabTools>
          <Icon name="chevron" size={6} />
          <Icon name="search" />
          <HelpButton aria-label="帮助">?</HelpButton>
        </TabTools>
      </TabRow>
      <Ribbon>
        {GROUPS.map((g) => (
          <Group key={g.label} $w={g.w}>
            <GroupBody $pad={g.pad}>
              {g.items.map((it, i) =>
                it === "sep" ? <Divider key={i} $h={38} /> : Array.isArray(it) ? <RowStack key={i} rows={it} /> : <BigButton key={i} {...it} />
              )}
            </GroupBody>
            <GroupLabel>{g.label}{g.caret && <Caret />}</GroupLabel>
          </Group>
        ))}
      </Ribbon>
      <Main>
        <Side>
          <SideTabs>
            <SideTab $w={11} $active aria-label="模型树"><Icon name="nodes" size={9} /></SideTab>
            <SideTab $w={16} aria-label="文件夹"><Icon name="folders" size={10} /></SideTab>
            <SideTab $w={15} aria-label="收藏夹"><Icon name="favorite" size={9} /></SideTab>
          </SideTabs>
          <SideHeader $h={15}>
            <Caret />
            <SideTitle>绘图树</SideTitle>
            <Spacer />
            <Icon name="list" size={10} />
            <Caret />
          </SideHeader>
          <DrawTree>
            <TreeItem $indent={1}><Icon name="drawing" size={9} /><span>绘图 DRW0001.DRW 的第 1 页</span></TreeItem>
            <TreeItem $indent={12}><Icon name="slabLine" size={10} />new_view_1</TreeItem>
          </DrawTree>
          <HScroll>
            <ScrollArrow $dir="left" aria-label="向左" />
            <Thumb />
            <ScrollArrow $dir="right" aria-label="向右" />
          </HScroll>
          <SideHeader $h={17}>
            <Caret />
            <SideTitle>模型树</SideTitle>
            <Icon name="slab" size={10} />
            <Caret />
            <Icon name="tools" size={10} />
            <Caret />
            <Icon name="list" size={10} />
            <Caret />
            <Icon name="treeFilter" size={10} />
          </SideHeader>
          <ModelTree>
            <TreeItem $indent={2}><Icon name="asm" />ASM0001.ASM</TreeItem>
            {MODEL.map((m) => (
              <TreeItem key={m.text} $indent={m.branch ? 4 : 12} $off={m.off}>
                {m.branch && <Expander />}
                <Icon name={m.icon} />
                {m.mark && <Mark />}
                {m.text}
              </TreeItem>
            ))}
          </ModelTree>
        </Side>
        <Canvas>
          <ViewBar>
            {VIEW_TOOLS.map((t) => (
              <ViewButton key={t} aria-label={t}><Icon name={t} size={11} /></ViewButton>
            ))}
          </ViewBar>
          <Assembly />
          <StatusLine>
            <span>比例:1.000</span>
            <span>类型:ASSEM</span>
            <span>名称:ASM0001</span>
            <span>尺寸:C</span>
          </StatusLine>
          <Watermark>
            <HexLogo />
            <Brand>
              <BrandName>3D世界网</BrandName>
              <BrandUrl>WWW.3DSJW.COM</BrandUrl>
            </Brand>
          </Watermark>
        </Canvas>
      </Main>
      <RibbonHighlight />
      <ViewDialog />
    </Window>
  );
}
